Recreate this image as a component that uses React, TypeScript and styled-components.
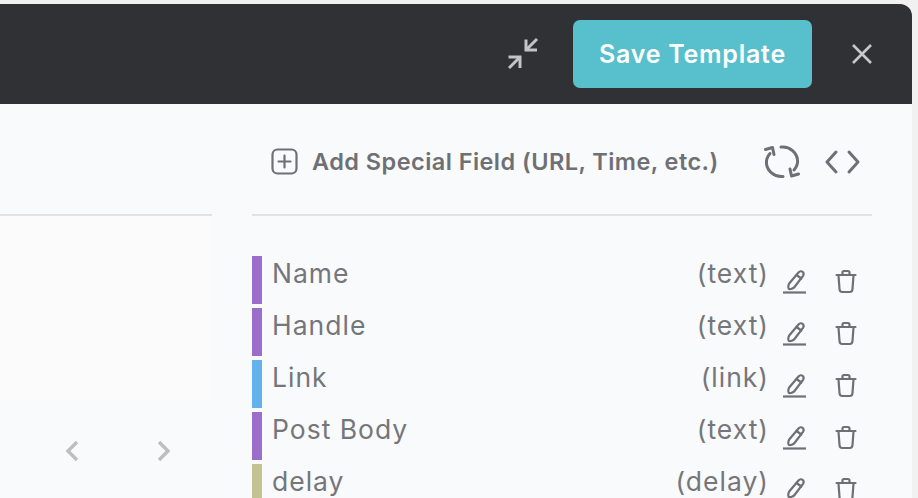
import React from "react";
import styled, { createGlobalStyle } from "styled-components";

const Global = createGlobalStyle`
  html, body { margin: 0; padding: 0; height: 100%; overflow: hidden; background: #f1f1f2; }
  #root { height: 100%; }
  * { box-sizing: border-box; }
`;

const Page = styled.div`
  width: 918px;
  height: 498px;
  padding: 4px 6px 0 0;
  overflow: hidden;
  font-family: Inter, "Liberation Sans", sans-serif;
`;

const Modal = styled.div`
  width: 912px;
  height: 494px;
  border-top-right-radius: 12px;
  overflow: hidden;
  background: #f9fafc;
  display: flex;
  flex-direction: column;
`;

const Header = styled.header`
  height: 100px;
  flex: none;
  background: #2f3135;
  display: flex;
  align-items: center;
  justify-content: flex-end;
  padding: 0 39px 0 0;
`;

const ShrinkIcon = styled.svg`
  width: 34px;
  height: 34px;
  margin-right: 33px;
  color: #c4c4c6;
`;

const SaveButton = styled.button`
  width: 239px;
  height: 68px;
  border: 0;
  border-radius: 7px;
  background: #58bfcc;
  color: #fdfefe;
  font: 600 25px Inter, "Liberation Sans", sans-serif;
  letter-spacing: 0.75px;
  padding: 0;
`;

const CloseIcon = styled.svg`
  width: 22px;
  height: 22px;
  margin-left: 39px;
  color: #c8c8ca;
`;

const Body = styled.div`
  flex: 1;
  display: flex;
  min-height: 0;
`;

const LeftPane = styled.section`
  width: 212px;
  flex: none;
  margin-right: 40px;
  display: flex;
  flex-direction: column;
  padding-top: 110px;
`;

const Preview = styled.div`
  height: 186px;
  border-top: 2px solid #e1e2e4;
  background: #fbfbfb;
`;

const Pager = styled.div`
  display: flex;
  justify-content: flex-start;
  gap: 70px;
  padding: 39px 0 0 63px;
  color: #bdbec0;
`;

const RightPane = styled.section`
  width: 620px;
  flex: none;
`;

const Toolbar = styled.div`
  height: 112px;
  border-bottom: 2px solid #e1e2e4;
  display: flex;
  align-items: center;
  padding: 5px 0 0 19px;
  color: #6f7074;
`;

const AddField = styled.div`
  display: flex;
  align-items: center;
  gap: 14px;
  font-size: 23.5px;
  font-weight: 600;
  letter-spacing: 0.45px;
  white-space: nowrap;
`;

const ToolIcon = styled.svg<{ $left: number }>`
  margin-left: ${(p) => p.$left}px;
  flex: none;
`;

const FieldList = styled.ul`
  list-style: none;
  margin: 40px 0 0;
  padding: 0;
  display: flex;
  flex-direction: column;
  gap: 4px;
`;

const Row = styled.li`
  height: 48px;
  display: flex;
  align-items: flex-start;
  color: #75767a;
  font-size: 26.5px;
  letter-spacing: 1px;
  line-height: 35px;
`;

const Swatch = styled.span<{ $color: string }>`
  width: 10px;
  height: 48px;
  flex: none;
  background: ${(p) => p.$color};
`;

const FieldName = styled.span`
  margin-left: 10px;
  flex: 1;
`;

const FieldType = styled.span`
  white-space: nowrap;
`;

const Actions = styled.span`
  display: flex;
  align-items: flex-start;
  width: 103px;
  padding: 12px 0 0 13px;
  gap: 28px;
  color: #6f7074;
`;

const Pencil = () => (
  <svg width="25" height="26" viewBox="0 0 25 26" fill="none" stroke="currentColor" strokeWidth="2.2" strokeLinecap="round" strokeLinejoin="round">
    <path d="M16.500 4.500c1.300-1.600 3.200-1.500 4.300-.5 1 1 1 2.600.2 3.800L12.500 19c-1 1.300-4.500 2.700-5.700 1.900-1-.8-.4-4.300.4-5.400l9.300-11Z" />
    <path d="M14.500 7l4.800 3.500" />
    <path d="M1 24.500h23" strokeLinecap="butt" />
  </svg>
);

const Trash = () => (
  <svg width="22" height="26" viewBox="0 0 22 26" fill="none" stroke="currentColor" strokeWidth="2.2" strokeLinecap="round" strokeLinejoin="round">
    <path d="M1.500 7h19" />
    <path d="M7.500 6.500V4.500c0-.9.6-1.500 1.500-1.500h4c.9 0 1.500.6 1.500 1.500v2" />
    <path d="M3.500 7.500l1 13.500c.1 1.800 1.200 3 2.700 3h7.600c1.500 0 2.600-1.200 2.700-3l1-13.500" />
  </svg>
);

const fields = [
  { name: "Name", type: "(text)", color: "#9b6fc9" },
  { name: "Handle", type: "(text)", color: "#9b6fc9" },
  { name: "Link", type: "(link)", color: "#63b2ec" },
  { name: "Post Body", type: "(text)", color: "#9b6fc9" },
  { name: "delay", type: "(delay)", color: "#c2c392" },
];

export default function App() {
  return (
    <Page>
      <Global />
      <Modal>
        <Header>
          <ShrinkIcon viewBox="0 0 34 34" fill="none" stroke="currentColor" strokeWidth="3">
            <path d="M20 13 31 2" />
            <path d="M20 2.500V13h11" />
            <path d="M14 20 3 31" />
            <path d="M2.500 20H14v11" />
          </ShrinkIcon>
          <SaveButton>Save Template</SaveButton>
          <CloseIcon viewBox="0 0 22 22" fill="none" stroke="currentColor" strokeWidth="2.6">
            <path d="M2 2l18 18M20 2 2 20" />
          </CloseIcon>
        </Header>
        <Body>
          <LeftPane>
            <Preview />
            <Pager>
              <svg width="20" height="24" viewBox="0 0 20 24" fill="none" stroke="currentColor" strokeWidth="3.4">
                <path d="M14 3 5 12l9 9" />
              </svg>
              <svg width="20" height="24" viewBox="0 0 20 24" fill="none" stroke="currentColor" strokeWidth="3.4">
                <path d="M6 3l9 9-9 9" />
              </svg>
            </Pager>
          </LeftPane>
          <RightPane>
            <Toolbar>
              <AddField>
                <svg width="27" height="27" viewBox="0 0 27 27" fill="none" stroke="currentColor" strokeWidth="2.2" strokeLinecap="round">
                  <rect x="1.500" y="1.500" width="24" height="24" rx="5" />
                  <path d="M13.500 7.500v12M7.500 13.500h12" />
                </svg>
                Add Special Field (URL, Time, etc.)
              </AddField>
              <ToolIcon $left={45} width="36" height="36" viewBox="0 0 36 36" fill="none" stroke="currentColor" strokeWidth="3" strokeLinecap="round" strokeLinejoin="round">
                <path d="M6 9.500C3 13 2 17 2.500 20c1 7 7.500 12.500 14.500 12.500h2" />
                <path d="M1.500 5.500 8.500 3.500l1.500 7" />
                <path d="M30 26c3-3.500 4-7.500 3.500-10.500C32.500 8.500 26 3 19 3h-2" />
                <path d="M34.500 30l-7 2-1.500-7" />
              </ToolIcon>
              <ToolIcon $left={25} width="36" height="26" viewBox="0 0 36 26" fill="none" stroke="currentColor" strokeWidth="3" strokeLinecap="round" strokeLinejoin="round">
                <path d="M11 3 2 13l9 10" />
                <path d="M24 3l9 10-9 10" />
              </ToolIcon>
            </Toolbar>
            <FieldList>
              {fields.map((f) => (
                <Row key={f.name}>
                  <Swatch $color={f.color} />
                  <FieldName>{f.name}</FieldName>
                  <FieldType>{f.type}</FieldType>
                  <Actions>
                    <Pencil />
                    <Trash />
                  </Actions>
                </Row>
              ))}
            </FieldList>
          </RightPane>
        </Body>
      </Modal>
    </Page>
  );
}
